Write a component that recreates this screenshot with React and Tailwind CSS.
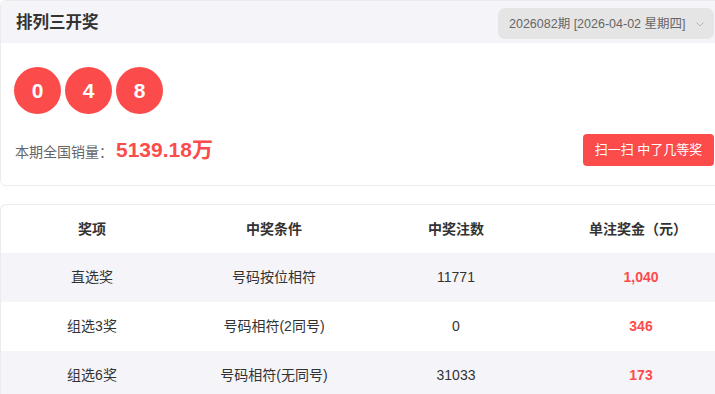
import React from "react";

const rows = [
  { name: "直选奖", cond: "号码按位相符", count: "11771", prize: "1,040" },
  { name: "组选3奖", cond: "号码相符(2同号)", count: "0", prize: "346" },
  { name: "组选6奖", cond: "号码相符(无同号)", count: "31033", prize: "173" },
];

export default function App() {
  return (
    <div className="w-[715px] h-[394px] overflow-hidden bg-white text-[#333] font-['Liberation_Sans','Noto_Sans_CJK_SC',sans-serif]">
      <div className="w-[729px]">
        <div className="rounded-[6px] border border-[#ebebeb] overflow-hidden">
          <div className="h-[42px] bg-[#f5f5f9] flex items-center justify-between pl-[15px] pr-[14px]">
            <div className="text-[16.5px] font-bold leading-[20px] text-[#333]">排列三开奖</div>
            <div className="h-[31px] w-[216px] rounded-[7px] bg-[#e5e5e5] flex items-center justify-between pl-[11px] pr-[9px] mt-[3px]">
              <span className="text-[12.5px] leading-[16px] text-[#666] whitespace-nowrap">2026082期 [2026-04-02 星期四]</span>
              <svg width="10" height="10" viewBox="0 0 10 10" className="text-[#b5b5b5] shrink-0">
                <path d="M1.5 3.5 L5 7 L8.5 3.5" fill="none" stroke="currentColor" strokeWidth="1" />
              </svg>
            </div>
          </div>
          <div className="h-[142px] bg-white pl-[13px] pr-[14px] pt-[24px]">
            <div className="flex gap-[4px]">
              {["0", "4", "8"].map((n) => (
                <div key={n} className="w-[47px] h-[47px] rounded-full bg-[#fc4b4b] flex items-center justify-center text-white font-bold text-[21px]">
                  {n}
                </div>
              ))}
            </div>
            <div className="flex items-center justify-between mt-[20px]">
              <div className="flex items-center pl-[1px]">
                <span className="text-[14px] text-[#666] leading-[16px] mt-[4px]">本期全国销量：</span>
                <span className="text-[21px] font-bold text-[#fc4b4b] leading-[26px] ml-[3px]">5139.18万</span>
              </div>
              <div className="h-[32px] w-[131px] rounded-[4px] bg-[#fc4b4b] text-white text-[13px] flex items-center justify-center">
                扫一扫 中了几等奖
              </div>
            </div>
          </div>
        </div>
        <div className="h-[18px]" />
        <div className="rounded-t-[6px] border-t border-l border-[#ebebeb]">
          <div className="grid grid-cols-4 h-[48px] items-center text-center text-[14px] font-bold text-[#333]">
            <div>奖项</div>
            <div>中奖条件</div>
            <div>中奖注数</div>
            <div>单注奖金（元）</div>
          </div>
          {rows.map((r, i) => (
            <div
              key={r.name}
              className={`grid grid-cols-4 h-[49px] items-center text-center text-[14px] text-[#333] ${i % 2 === 0 ? "bg-[#f5f5f9]" : "bg-white"}`}
            >
              <div>{r.name}</div>
              <div>{r.cond}</div>
              <div>{r.count}</div>
              <div className="font-bold text-[#fc4b4b] pl-[6px]">{r.prize}</div>
            </div>
          ))}
        </div>
      </div>
    </div>
  );
}
